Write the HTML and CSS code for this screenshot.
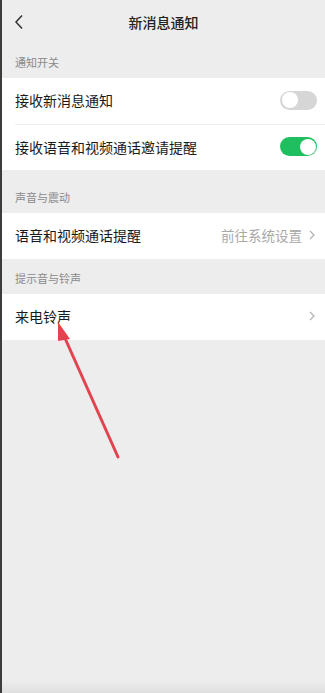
FILE: index.html
```html
<!DOCTYPE html>
<html lang="zh-CN">

<head>
    <meta charset="UTF-8">
    <meta name="viewport" content="width=device-width, initial-scale=1.0">
    <title>新消息通知</title>
    <link rel="stylesheet" href="styles.css">
</head>

<body>
    <div class="screen">
        <!-- 상단바 -->
        <div class="topbar">
            <svg class="back" viewBox="0 0 10 16">
                <polyline points="8,1.5 2,8 8,14.5"></polyline>
            </svg>
            <h1 class="title">新消息通知</h1>
        </div>

        <div class="label lb1">通知开关</div>
        <div class="group">
            <div class="row">
                <span class="name">接收新消息通知</span>
                <span class="switch"></span>
            </div>
            <div class="row line">
                <span class="name">接收语音和视频通话邀请提醒</span>
                <span class="switch on"></span>
            </div>
        </div>

        <div class="label lb2">声音与震动</div>
        <div class="group">
            <div class="row">
                <span class="name">语音和视频通话提醒</span>
                <span class="more">前往系统设置
                    <svg class="arr" viewBox="0 0 6 10">
                        <polyline points="1,1 5,5 1,9"></polyline>
                    </svg>
                </span>
            </div>
        </div>

        <div class="label lb3">提示音与铃声</div>
        <div class="group">
            <div class="row">
                <span class="name">来电铃声</span>
                <span class="more">
                    <svg class="arr" viewBox="0 0 6 10">
                        <polyline points="1,1 5,5 1,9"></polyline>
                    </svg>
                </span>
            </div>
        </div>

        <!-- 빨간 화살표 (화면 위에 겹침) -->
        <svg class="pointer" viewBox="0 0 325 693">
            <line x1="118" y1="457" x2="64" y2="336"></line>
            <polygon points="58,322 70,339 58,341"></polygon>
        </svg>

        <div class="shade"></div>
    </div>
</body>

</html>
```

FILE: styles.css
```css
html,
body {
    margin: 0;
    padding: 0;
}

body {
    background-color: #ededed;
    font-family: "Noto Sans CJK SC", "Noto Sans", sans-serif;
    color: #1a1a1a;
}

/* 전체 화면 */
.screen {
    position: relative;
    height: 693px;
    border-left: 2px solid #3c3c3c;
    background-color: #ededed;
    overflow: hidden;
}

/* 상단바 */
.topbar {
    position: relative;
    height: 45px;
    display: flex;
    align-items: center;
    justify-content: center;
}

.back {
    position: absolute;
    left: 12px;
    top: 14px;
    width: 10px;
    height: 16px;
}

.back polyline {
    fill: none;
    stroke: #333;
    stroke-width: 1.5;
}

.title {
    margin: 0 0 2px;
    font-size: 14px;
    font-weight: 500;
    color: #222;
}

/* 섹션 제목 */
.label {
    padding: 9px 13px 8px;
    font-size: 11px;
    line-height: 16px;
    color: #8a8a8a;
}

.lb2 {
    padding-top: 19px;
}

.lb3 {
    padding-top: 11px;
}

/* 흰색 그룹 */
.group {
    background-color: #fff;
}

.row {
    box-sizing: border-box;
    height: 46px;
    margin-left: 13px;
    padding: 0 8px 2px 0;
    display: flex;
    align-items: center;
    justify-content: space-between;
}

.row.line {
    border-top: 1px solid #eeeeee;
}

.name {
    font-size: 14px;
}

/* 스위치 */
.switch {
    position: relative;
    width: 37px;
    height: 19px;
    border-radius: 10px;
    background-color: #d6d6d6;
}

.switch::after {
    content: '';
    position: absolute;
    top: 1.5px;
    left: 1.5px;
    width: 16px;
    height: 16px;
    border-radius: 50%;
    background-color: #fff;
}

.switch.on {
    background-color: #1fbe5f;
}

.switch.on::after {
    left: auto;
    right: 1.5px;
}

/* 오른쪽 안내 */
.more {
    display: flex;
    align-items: center;
    gap: 7px;
    font-size: 13.5px;
    color: #a8a8a8;
}

.arr {
    width: 6px;
    height: 10px;
    margin-right: 2px;
}

.arr polyline {
    fill: none;
    stroke: #b4b4b4;
    stroke-width: 1.3;
}

/* 빨간 화살표 */
.pointer {
    position: absolute;
    left: -2px;
    top: 0;
    width: 325px;
    height: 693px;
    pointer-events: none;
}

.pointer line {
    stroke: #e2434f;
    stroke-width: 3;
    stroke-linecap: round;
}

.pointer polygon {
    fill: #e2434f;
}

/* 아래쪽 그림자 */
.shade {
    position: absolute;
    left: 0;
    right: 0;
    bottom: 0;
    height: 14px;
    background: linear-gradient(rgba(0, 0, 0, 0), rgba(0, 0, 0, 0.06));
}
```
